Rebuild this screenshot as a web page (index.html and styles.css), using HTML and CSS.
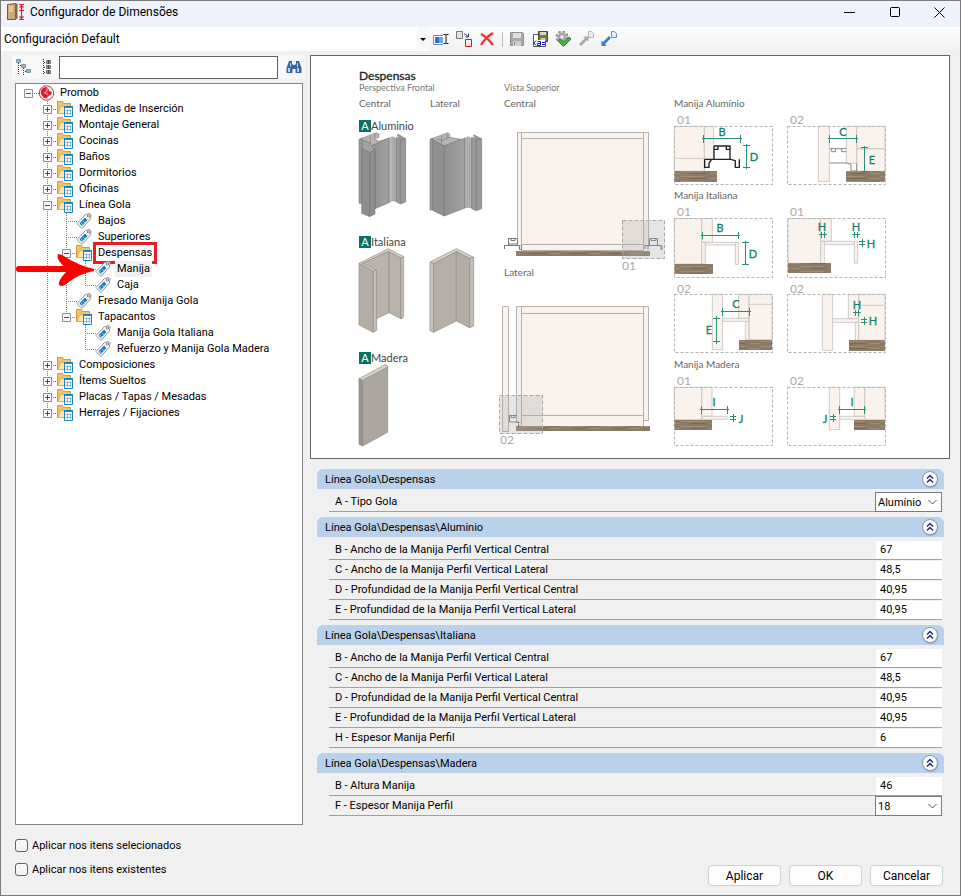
FILE: index.html
```html
<!DOCTYPE html>
<html lang="es">
<head>
    <meta charset="UTF-8" />
    <meta name="viewport" content="width=device-width, initial-scale=1.0" />
    <title>Configurador de Dimensões</title>
    <link rel="stylesheet" href="styles.css">
</head>
<body>
    <svg class="defs" aria-hidden="true">
        <symbol id="i-folder" viewBox="0 0 18 16">
            <path d="M.5 12.500V.5h5l1 2h7v10z" fill="#f0c36a" stroke="#cf9a45"/>
            <path d="M1 12.500l2.500-7h11v7z" fill="#fde7ab" stroke="#dcab5b"/>
            <path d="M7.500 5.500h8v10h-8z" fill="#fff" stroke="#1b86bd"/>
            <path d="M7 6h9" stroke="#1b86bd" stroke-width="2"/>
            <path d="M8.500 9.500h6M8.500 12.500h6M10.500 8v6M13.500 8v6" stroke="#8bb6d2"/>
        </symbol>
        <symbol id="i-tag" viewBox="0 0 18 16">
            <path d="M1 10.500L9.500 1.500l4.500-1 1 1-.5 4.500L6 15.500z" fill="#f6f6f6" stroke="#959595"/>
            <path d="M3.500 10.500l5.500-6 2.500 2.500-5.500 6z" fill="#1d7fc0"/>
            <path d="M5 10l2 2M7 8l2 2" stroke="#8fc6e8"/>
            <circle cx="12.500" cy="3" r="1.200" fill="#fff" stroke="#777"/>
        </symbol>
        <symbol id="i-plus" viewBox="0 0 9 9">
            <path d="M.5.5h8v8h-8z" fill="#f6f6f6" stroke="#919191"/>
            <path d="M2 4.500h5M4.500 2v5" stroke="#3b4f81"/>
        </symbol>
        <symbol id="i-minus" viewBox="0 0 9 9">
            <path d="M.5.5h8v8h-8z" fill="#f6f6f6" stroke="#919191"/>
            <path d="M2 4.500h5" stroke="#3b4f81"/>
        </symbol>
        <symbol id="i-up" viewBox="0 0 18 18">
            <circle cx="9.500" cy="10" r="8" fill="#8796ab" opacity=".5"/>
            <circle cx="9" cy="9" r="7.500" fill="#fdfdfd" stroke="#8b95a8"/>
            <path d="M6 8.500l3-3 3 3M6 12.500l3-3 3 3" fill="none" stroke="#23306e" stroke-width="1.500"/>
        </symbol>
    </svg>

    <div class="window">
        <header class="titlebar">
            <svg width="18" height="18" viewBox="0 0 18 18">
                <path d="M.5 1.500l8-1v16h-8z" fill="#cda974" stroke="#7d5a36"/>
                <path d="M2 3h4v6H2z" fill="#e3c79b"/>
                <path d="M8.500.5h2v15l-2 1z" fill="#8a6338"/>
                <path d="M12 1.500h5M12 7.500h5M12 16.500h5M14.500 2v14M12.500 4.500l2-2 2 2M12.500 13.500l2 2 2-2" fill="none" stroke="#dd1f2f" stroke-width="1.200"/>
            </svg>
            <h1>Configurador de Dimensões</h1>
            <button class="win-btn" aria-label="Minimizar"><svg width="11" height="11"><path d="M0 5.500h11" stroke="#000"/></svg></button>
            <button class="win-btn" aria-label="Maximizar"><svg width="11" height="11"><rect x=".5" y=".5" width="9" height="9" rx="1" fill="none" stroke="#000"/></svg></button>
            <button class="win-btn" aria-label="Cerrar"><svg width="11" height="11"><path d="M.5.5l10 10M10.500.5l-10 10" stroke="#000"/></svg></button>
        </header>

        <div class="toolbar">
            <select class="config-select" aria-label="Configuración">
                <option>Configuración Default</option>
            </select>
            <button class="tool" aria-label="Renombrar">
                <svg viewBox="0 0 16 16"><path d="M.5 4.500h12v9H.5z" fill="#fff" stroke="#6f8fb5"/><path d="M2 6h8v6H2z" fill="#6ba4ee"/><path d="M2 6h4v6H2z" fill="#2f6fd6"/><path d="M10 3h6v11h-6z" fill="#fcfcfc"/><path d="M10.500 3.500h2l.5.5.5-.5h2M10.500 12.500h2l.5-.5.5.5h2M13 4v8" fill="none" stroke="#111"/></svg>
            </button>
            <button class="tool" aria-label="Duplicar">
                <svg viewBox="0 0 16 16"><path d="M.5.5h6v7h-6z" fill="#e4dfe3" stroke="#777"/><path d="M8 2.500l4 3M12.500 2.500v3.500h-3" fill="none" stroke="#1c3d8c"/><path d="M9.500 8.500h6v7h-6z" fill="#fdeaea" stroke="#e01515"/></svg>
            </button>
            <button class="tool" aria-label="Eliminar">
                <svg viewBox="0 0 16 16"><path d="M2 3c4 2 8 6 12 11M14 2C9 5 5 9 2 14" fill="none" stroke="#ff2a22" stroke-width="2.200"/></svg>
            </button>
            <span class="separator"></span>
            <button class="tool" aria-label="Guardar">
                <svg viewBox="0 0 16 16"><path d="M1.500 1.500h12l1 1v12h-13z" fill="#a9a9a9" stroke="#8e8e8e"/><path d="M4 2h8v5H4z" fill="#dedede"/><path d="M4 10h8v5H4z" fill="#cfcfcf"/><path d="M5.500 11v3" stroke="#888"/></svg>
            </button>
            <button class="tool" aria-label="Guardar como">
                <svg viewBox="0 0 16 16"><path d="M1.500 3.500h12v12h-12z" fill="#fff" stroke="#555"/><path d="M6.500.5h9v10h-9z" fill="#77764f" stroke="#4b4b33"/><path d="M8 1h6v3H8z" fill="#d8d8c4"/><path d="M8.500 7h5v3h-5z" fill="#c9c9b4"/><path d="M2 9h11v6H2z" fill="#fff"/><path d="M4 9.500l-2 2.500 2 2.500M8.500 12.500h-3v2h3v-4h-3M10 11.500h3M10 13.500h3" fill="none" stroke="#1010e0"/></svg>
            </button>
            <button class="tool" aria-label="Validar">
                <svg viewBox="0 0 16 16"><circle cx="7" cy="6" r="5.500" fill="none" stroke="#8c8c8c" stroke-width="2" stroke-dasharray="2.500 1.800"/><circle cx="7" cy="6" r="4.600" fill="#a5a5a5"/><circle cx="7" cy="6" r="1.800" fill="#f1f1f1"/><path d="M3 10l2-2 3.500 3L14 6l2 2-7.500 7.500z" fill="#45b545" stroke="#1f7f26"/></svg>
            </button>
            <button class="tool" aria-label="Exportar">
                <svg viewBox="0 0 16 16"><path d="M1 13l6-6-1.500-1.500h5v5L9 9l-6 6z" fill="#a8a8a8"/><path d="M10.500.5h3l2 2v4h-5z" fill="#ececec" stroke="#b5b5b5"/></svg>
            </button>
            <button class="tool" aria-label="Importar">
                <svg viewBox="0 0 16 16"><path d="M10 7l-6 6 1.500 2H.5V9.500L2 11l6-6z" fill="#3481d0"/><path d="M10.500.5h3l2 2v4h-5z" fill="#e2eefb" stroke="#5a94d6"/></svg>
            </button>
        </div>

        <main class="content">
            <section class="side">
                <div class="search-bar">
                    <button class="tool" aria-label="Contraer todo">
                        <svg viewBox="0 0 16 16"><path d="M2.500 4v12M4 6.500h3M7.500 9v7M9 12.500h3" fill="none" stroke="#333" stroke-dasharray="1 1"/><path d="M.5.500h4v3h-4zM5.500 5.500h4v3h-4zM10.500 10.500h4v3h-4z" fill="#eef6fa" stroke="#7b97a6"/><path d="M1 2h3M6 7h3M11 12h3" stroke="#56707f"/></svg>
                    </button>
                    <button class="tool" aria-label="Expandir todo">
                        <svg viewBox="0 0 16 16"><path d="M4.500 0v16M5 3.500h3M5 8.500h3M5 13.500h3" fill="none" stroke="#333" stroke-dasharray="1 1"/><path d="M7.500 1.500h4v3h-4zM7.500 6.500h4v3h-4zM7.500 11.500h4v3h-4z" fill="#dfe6ea" stroke="#777"/><path d="M9.500 1v4M9.500 6v4M9.500 11v4M8 3h3M8 8h3M8 13h3" stroke="#444"/></svg>
                    </button>
                    <input class="search" type="text" aria-label="Buscar">
                    <button class="tool" aria-label="Buscar">
                        <svg viewBox="0 0 16 16"><path d="M3 2h3v3l1.500 1h1L10 5V2h3l2.500 7v5h-6v-4h-3v4h-6V9z" fill="#3a64a6"/><path d="M2 9h2v4H2zM11 9h2v4h-2zM4 4h1v4H4zM11 4h1v4h-1z" fill="#b6d0f0"/></svg>
                    </button>
                </div>

                <div class="tree">
                    <ul class="root">
                        <li>
                            <div class="node"><svg class="toggle"><use href="#i-minus"/></svg>
                                <svg class="icon" viewBox="0 0 18 16"><circle cx="8.500" cy="8" r="7.200" fill="#fff" stroke="#d3222f"/><path d="M8 2c-4 0-6 4-5 7s4 5 6 4l1-2 3-1 1-3-3-1-1-3z" fill="#d9202e"/><path d="M9 3v3.500L6 8M7 8l3 1.500" stroke="#f7b9bd" fill="none"/></svg><span>Promob</span></div>
                            <ul>
                                <li><div class="node"><svg class="toggle"><use href="#i-plus"/></svg><svg class="icon"><use href="#i-folder"/></svg><span>Medidas de Inserción</span></div></li>
                                <li><div class="node"><svg class="toggle"><use href="#i-plus"/></svg><svg class="icon"><use href="#i-folder"/></svg><span>Montaje General</span></div></li>
                                <li><div class="node"><svg class="toggle"><use href="#i-plus"/></svg><svg class="icon"><use href="#i-folder"/></svg><span>Cocinas</span></div></li>
                                <li><div class="node"><svg class="toggle"><use href="#i-plus"/></svg><svg class="icon"><use href="#i-folder"/></svg><span>Baños</span></div></li>
                                <li><div class="node"><svg class="toggle"><use href="#i-plus"/></svg><svg class="icon"><use href="#i-folder"/></svg><span>Dormitorios</span></div></li>
                                <li><div class="node"><svg class="toggle"><use href="#i-plus"/></svg><svg class="icon"><use href="#i-folder"/></svg><span>Oficinas</span></div></li>
                                <li>
                                    <div class="node"><svg class="toggle"><use href="#i-minus"/></svg><svg class="icon"><use href="#i-folder"/></svg><span>Línea Gola</span></div>
                                    <ul>
                                        <li><div class="node leaf"><svg class="icon"><use href="#i-tag"/></svg><span>Bajos</span></div></li>
                                        <li><div class="node leaf"><svg class="icon"><use href="#i-tag"/></svg><span>Superiores</span></div></li>
                                        <li>
                                            <div class="node"><svg class="toggle"><use href="#i-minus"/></svg><svg class="icon"><use href="#i-folder"/></svg><span class="marked">Despensas</span></div>
                                            <ul>
                                                <li><div class="node leaf selected"><svg class="icon"><use href="#i-tag"/></svg><span>Manija</span>
                                                    <svg class="arrow" viewBox="0 0 80 38"><path d="M4 18h60" stroke="#fe0000" stroke-width="6" stroke-linecap="round"/><path d="M43 3c6 0 12 9 36 15v2C55 25 53 35 46 35c-5-1-1-8 7-16C46 13 41 8 43 3z" fill="#fe0000"/></svg></div></li>
                                                <li><div class="node leaf"><svg class="icon"><use href="#i-tag"/></svg><span>Caja</span></div></li>
                                            </ul>
                                        </li>
                                        <li><div class="node leaf"><svg class="icon"><use href="#i-tag"/></svg><span>Fresado Manija Gola</span></div></li>
                                        <li>
                                            <div class="node"><svg class="toggle"><use href="#i-minus"/></svg><svg class="icon"><use href="#i-folder"/></svg><span>Tapacantos</span></div>
                                            <ul>
                                                <li><div class="node leaf"><svg class="icon"><use href="#i-tag"/></svg><span>Manija Gola Italiana</span></div></li>
                                                <li><div class="node leaf"><svg class="icon"><use href="#i-tag"/></svg><span>Refuerzo y Manija Gola Madera</span></div></li>
                                            </ul>
                                        </li>
                                    </ul>
                                </li>
                                <li><div class="node"><svg class="toggle"><use href="#i-plus"/></svg><svg class="icon"><use href="#i-folder"/></svg><span>Composiciones</span></div></li>
                                <li><div class="node"><svg class="toggle"><use href="#i-plus"/></svg><svg class="icon"><use href="#i-folder"/></svg><span>Ítems Sueltos</span></div></li>
                                <li><div class="node"><svg class="toggle"><use href="#i-plus"/></svg><svg class="icon"><use href="#i-folder"/></svg><span>Placas / Tapas / Mesadas</span></div></li>
                                <li><div class="node"><svg class="toggle"><use href="#i-plus"/></svg><svg class="icon"><use href="#i-folder"/></svg><span>Herrajes / Fijaciones</span></div></li>
                            </ul>
                        </li>
                    </ul>
                </div>

                <div class="checks">
                    <label><input type="checkbox">Aplicar nos itens selecionados</label>
                    <label><input type="checkbox">Aplicar nos itens existentes</label>
                </div>
            </section>

            <section class="detail">
                <div class="preview">
                    <svg class="drawing" viewBox="311 56 638 402" role="img" aria-label="Despensas">
                        <defs>
                            <linearGradient id="metal" x1="0" x2="1"><stop offset="0" stop-color="#8f8f8f"/><stop offset="1" stop-color="#a2a2a2"/></linearGradient>
                            <pattern id="wood" width="40" height="5" patternUnits="userSpaceOnUse">
                                <path d="M0 0h40v5H0z" fill="#8d7b66"/>
                                <path d="M0 1.500h24M30 3.500h10" stroke="#a08d76"/>
                                <path d="M10 3.500h16" stroke="#7b6a56"/>
                            </pattern>
                        </defs>

                        <text class="t-title" x="359" y="80">Despensas</text>
                        <g class="t-sub">
                            <text x="359" y="91">Perspectiva Frontal</text>
                            <text x="504" y="91">Vista Superior</text>
                        </g>
                        <g class="t-text">
                            <text x="359" y="107">Central</text>
                            <text x="430" y="107">Lateral</text>
                            <text x="504" y="107">Central</text>
                            <text x="504" y="276">Lateral</text>
                            <text x="674" y="107">Manija Alumínio</text>
                            <text x="674" y="199">Manija Italiana</text>
                            <text x="674" y="368">Manija Madera</text>
                        </g>
                        <g class="t-num">
                            <text x="622" y="270">01</text>
                            <text x="500" y="444">02</text>
                            <text x="677" y="124">01</text>
                            <text x="790" y="124">02</text>
                            <text x="677" y="216">01</text>
                            <text x="790" y="216">01</text>
                            <text x="677" y="293">02</text>
                            <text x="790" y="293">02</text>
                            <text x="677" y="385">01</text>
                            <text x="790" y="385">02</text>
                        </g>
                        <path d="M359 120h12v12h-12zM359 236h12v12h-12zM359 352h12v12h-12z" fill="#0c7163"/>
                        <g class="t-badge">
                            <text x="365" y="130">A</text>
                            <text x="365" y="246">A</text>
                            <text x="365" y="362">A</text>
                        </g>
                        <g class="t-kind">
                            <text x="371" y="130">Aluminio</text>
                            <text x="371" y="246">Italiana</text>
                            <text x="371" y="362">Madera</text>
                        </g>

                        <!-- aluminium profiles -->
                        <g transform="translate(345 60) scale(.3333)" stroke="#6a6a6a" stroke-width="1.500" stroke-linejoin="round">
                            <path d="M42 238l10-4v196H42z" fill="#9a9a9a"/>
                            <path d="M48 236l46-18 8 4v10l-14 6 14 6 30-9-46 28z" fill="#b4b4b4"/>
                            <path d="M76 258l56-24v194l-42 18V268z" fill="url(#metal)"/>
                            <path d="M132 234l10-4 12 6v188l-12-2-10 6z" fill="#b6b6b6" stroke-width="1"/>
                            <path d="M144 232v192M149 233v192" stroke="#8f8f8f"/>
                            <path d="M158 222l24 14v190l-16 6-12-6V232l10 4-6-8z" fill="#999"/>
                            <path d="M166 240l16-4M166 240v190" fill="none"/>
                            <path d="M52 240v26l22 12 16-10-16-6v-14z" fill="#a3a3a3"/>
                            <path d="M50 266l24 12 16-10v194l-16 8-24-10z" fill="#8f8f8f"/>
                            <path d="M74 278v190M76 226v26M90 220v14" fill="none"/>

                            <path d="M255 238l9-4v216h-9z" fill="#9a9a9a"/>
                            <path d="M260 236l48-18 6 4v10l34 6-50 20z" fill="#b4b4b4"/>
                            <path d="M290 228v22M306 222v14M276 236l14 6 24-10" fill="none"/>
                            <path d="M264 240l34 18v210l-34-16z" fill="#8f8f8f"/>
                            <path d="M298 258l62-24v210l-62 24z" fill="url(#metal)"/>
                            <path d="M360 234l10-4 10 6v208l-10-2-10 2z" fill="#b6b6b6" stroke-width="1"/>
                            <path d="M368 232v210M374 232v210" stroke="#8f8f8f"/>
                            <path d="M386 224l24 12v210l-16 6-14-6V232l12 4-6-8z" fill="#999"/>
                            <path d="M394 240l16-4M394 240v210" fill="none"/>
                        </g>

                        <!-- italian and wood profiles -->
                        <g transform="translate(345 230) scale(.3333)" stroke="#8e8983" stroke-width="2" stroke-linejoin="round">
                            <path d="M50 100l82-36v184l-38 18z" fill="#bab4ad"/>
                            <path d="M132 64l36 20v182l-36-18z" fill="#b9b3ac"/>
                            <path d="M168 84l8-4v182l-8 4z" fill="#c7c2bc"/>
                            <path d="M42 100l88-44 46 24-8 4-38-20-78 36 42 20-10 4z" fill="#d5d0ca"/>
                            <path d="M42 100l43 23v184l-43-22z" fill="#b3ada6"/>
                            <path d="M85 123l10-4v182l-10 6z" fill="#c4beb8"/>

                            <path d="M255 96l79-40 52 26-10 4-42-20-66 34z" fill="#d5d0ca"/>
                            <path d="M255 96l11 5v206l-11-5z" fill="#c7c2bc"/>
                            <path d="M266 101l68-36v208l-68 34z" fill="#b5afa8"/>
                            <path d="M334 65l40 20v208l-40-20z" fill="#b3ada6"/>
                            <path d="M374 86l12-4v206l-12 5z" fill="#c4beb8"/>

                            <path d="M42 446l78-42 8 4v8l-76 36z" fill="#d5d0ca"/>
                            <path d="M42 446l11 5v197l-11-5z" fill="#97928c"/>
                            <path d="M53 451l75-40v196l-75 41z" fill="#aca6a0"/>
                        </g>

                        <!-- top views -->
                        <g class="board">
                            <path d="M521.500 138.500h122v112h-122z"/>
                            <path d="M517.500 132.500h4v113h-4zM643.500 132.500h5v113h-5zM521.500 132.500h122v6h-122zM521.500 244.500h122v6h-122z"/>
                            <path d="M502.500 306.500h6v125h-6zM516.500 306.500h5v116h-5zM643.500 306.500h5v114h-5zM521.500 306.500h122v7h-122zM521.500 313.500h122v102h-122zM521.500 415.500h122v11h-122z"/>
                        </g>
                        <path d="M516 251h134v5H516zM516 426h134v5H516z" fill="url(#wood)"/>
                        <g fill="none" stroke="#777">
                            <path d="M504.500 249v-3.500h4v-7h9M508.500 239v5h9v-5M504.500 245.500h15v4h2v-4M511 238.500v2h4v-2"/>
                            <path d="M645 249v-3.500h3v4M648 245.500h13v4h1v-4M649.500 245v-6.500h8v7M651 238.500v2h5v-2"/>
                            <path d="M509 415.500h8M509.500 416v6h9v4h2M511 415.500v2h4v-2"/>
                        </g>
                        <g fill="#aaa" fill-opacity=".3" stroke="#aaa" stroke-dasharray="4 2">
                            <path d="M622.500 220.500h42v38h-42zM499.500 395.500h43v38h-43z"/>
                        </g>

                        <!-- detail views -->
                        <g transform="translate(665 90) scale(.3333)">
                            <g class="board thick">
                                <path d="M28 109h90v135H28zM118 109h28v99h-28zM28 205h90v39H28z"/>
                                <path d="M460 109h33v165h-33zM544 109h31v111h-31zM575 109h85v67h-85zM575 176h85v68h-85z"/>
                                <path d="M28 386h82v136H28zM110 386h32v71h-32zM110 457h11v65h-11zM211 457h10v66h-10zM121 457h90v8h-90z"/>
                                <path d="M369 386h98v134h-98zM467 386h32v68h-32zM467 454h11v66h-11zM568 454h10v66h-10zM478 454h90v10h-90z"/>
                            </g>
                            <path d="M147 168h48v40M147 168v40M147 178h12v-9M184 169v9h12M119 208h78l14 4v20h12v-24M119 208v24h13v-12l8-12" fill="none" stroke="#222" stroke-width="4"/>
                            <path d="M494 176h50M500 176v9h12v-9M530 176v9h14M494 219h50l14 4v20h17v-23" fill="none" stroke="#888" stroke-width="3"/>
                        </g>
                        <g transform="translate(665 270) scale(.3333)">
                            <g class="board thick">
                                <path d="M142 73h31v166h-31zM221 73h31v72h-31zM252 73h69v136h-69zM252 103h69M173 145h79v9h-79zM241 154h11v55h-11z"/>
                                <path d="M472 73h31v168h-31zM550 73h31v73h-31zM581 73h79v138h-79zM581 106h79M503 146h78v11h-78zM571 157h10v54h-10z"/>
                                <path d="M28 352h82v97H28zM110 352h31v87h-31zM110 439h76v9h-76z"/>
                                <path d="M493 352h31v127h-31zM568 352h31v87h-31zM599 352h61v97h-61zM524 439h75v9h-75z"/>
                            </g>
                        </g>
                        <path d="M674 171h43v11h-43zM846 171h39v11h-39zM674 264h39v10h-39zM788 263h43v10h-43zM739 340h33v10h-33zM849 340h36v11h-36zM674 420h38v10h-38zM854 420h31v10h-31z" fill="url(#wood)"/>
                        <g class="frame">
                            <path d="M674.500 126.500h98v58h-98zM787.500 126.500h98v58h-98zM674.500 218.500h98v59h-98zM787.500 218.500h98v59h-98zM674.500 294.500h98v58h-98zM787.500 294.500h98v58h-98zM674.500 387.500h98v58h-98zM787.500 387.500h98v58h-98z"/>
                        </g>

                        <!-- dimension lines -->
                        <g class="dim">
                            <path d="M702 138.500h40M703.500 135v8M740.500 135v8M746.500 144v25M743 145.500h7M743 167.500h7"/>
                            <path d="M828 138.500h30M829.500 135v8M856.500 135v8M864.500 146v26M861 147.500h7M861 171.500h7"/>
                            <path d="M701 235.500h39M702.500 232v7M738.500 232v7M745.500 241v24M742 242.500h7M742 264.500h7"/>
                            <path d="M819 234.500h8M821.500 232v6M824.500 232v6M852 234.500h8M854.500 232v6M857.500 232v6M859 241.500h6M859 244.500h6M862.500 239v8"/>
                            <path d="M721 311.500h30M722.500 308v8M749.500 308v8M716.500 316v28M713 318.500h7M713 341.500h7"/>
                            <path d="M853 312.500h8M855.500 310v6M858.500 310v6M861 319.500h6M861 322.500h6M864.500 317v8"/>
                            <path d="M700 409.500h29M701.500 406v8M727.500 406v8M730 416.500h6M730 419.500h6M733.500 414v8"/>
                            <path d="M838 409.500h28M839.500 406v8M864.500 406v8M830 416.500h6M830 419.500h6M833.500 414v8"/>
                        </g>
                        <g class="t-dim">
                            <text x="722" y="136">B</text><text x="754" y="161">D</text>
                            <text x="843" y="136">C</text><text x="872" y="164">E</text>
                            <text x="720" y="232">B</text><text x="753" y="258">D</text>
                            <text x="822" y="231">H</text><text x="856" y="231">H</text><text x="871" y="248">H</text>
                            <text x="736" y="308">C</text><text x="709" y="334">E</text>
                            <text x="857" y="309">H</text><text x="873" y="325">H</text>
                            <text x="714" y="406">I</text><text x="741" y="423">J</text>
                            <text x="852" y="406">I</text><text x="825" y="423">J</text>
                        </g>
                    </svg>
                </div>

                <form class="props">
                    <fieldset>
                        <div class="group-head"><h2>Línea Gola\Despensas</h2><button type="button" aria-label="Contraer"><svg width="18" height="18"><use href="#i-up"/></svg></button></div>
                        <div class="row"><label for="tipo">A - Tipo Gola</label><select id="tipo"><option>Alumínio</option><option>Italiana</option><option>Madera</option></select></div>
                    </fieldset>
                    <fieldset>
                        <div class="group-head"><h2>Línea Gola\Despensas\Aluminio</h2><button type="button" aria-label="Contraer"><svg width="18" height="18"><use href="#i-up"/></svg></button></div>
                        <div class="row"><label for="al-b">B - Ancho de la Manija Perfil Vertical Central</label><input id="al-b" type="text" value="67"></div>
                        <div class="row"><label for="al-c">C - Ancho de la Manija Perfil Vertical Lateral</label><input id="al-c" type="text" value="48,5"></div>
                        <div class="row"><label for="al-d">D - Profundidad de la Manija Perfil Vertical Central</label><input id="al-d" type="text" value="40,95"></div>
                        <div class="row"><label for="al-e">E - Profundidad de la Manija Perfil Vertical Lateral</label><input id="al-e" type="text" value="40,95"></div>
                    </fieldset>
                    <fieldset>
                        <div class="group-head"><h2>Línea Gola\Despensas\Italiana</h2><button type="button" aria-label="Contraer"><svg width="18" height="18"><use href="#i-up"/></svg></button></div>
                        <div class="row"><label for="it-b">B - Ancho de la Manija Perfil Vertical Central</label><input id="it-b" type="text" value="67"></div>
                        <div class="row"><label for="it-c">C - Ancho de la Manija Perfil Vertical Lateral</label><input id="it-c" type="text" value="48,5"></div>
                        <div class="row"><label for="it-d">D - Profundidad de la Manija Perfil Vertical Central</label><input id="it-d" type="text" value="40,95"></div>
                        <div class="row"><label for="it-e">E - Profundidad de la Manija Perfil Vertical Lateral</label><input id="it-e" type="text" value="40,95"></div>
                        <div class="row"><label for="it-h">H - Espesor Manija Perfil</label><input id="it-h" type="text" value="6"></div>
                    </fieldset>
                    <fieldset>
                        <div class="group-head"><h2>Línea Gola\Despensas\Madera</h2><button type="button" aria-label="Contraer"><svg width="18" height="18"><use href="#i-up"/></svg></button></div>
                        <div class="row"><label for="ma-b">B - Altura Manija</label><input id="ma-b" type="text" value="46"></div>
                        <div class="row"><label for="ma-f">F - Espesor Manija Perfil</label><select id="ma-f"><option>18</option></select></div>
                    </fieldset>
                </form>

                <div class="actions">
                    <button>Aplicar</button>
                    <button>OK</button>
                    <button>Cancelar</button>
                </div>
            </section>
        </main>
    </div>
</body>
</html>
```

FILE: styles.css
```css
* {
    box-sizing: border-box;
}

body {
    margin: 0;
    font-family: Roboto, 'Liberation Sans', sans-serif;
    font-size: 11px;
    color: #000;
}

button, input, select {
    font: inherit;
    color: inherit;
}

ul {
    list-style: none;
    margin: 0;
    padding: 0;
}

.defs {
    display: none;
}

.window {
    display: flex;
    flex-direction: column;
    min-height: 100vh;
    border: 1px solid #7b7b7b;
    background-color: #f0f0f0;
}

.titlebar {
    display: flex;
    align-items: center;
    height: 26px;
    padding: 0 0 4px 6px;
    background-color: #eff2fa;
}

.titlebar h1 {
    flex: 1;
    margin: 0 0 0 5px;
    font-size: 12px;
    font-weight: 400;
}

.win-btn {
    display: grid;
    place-items: center;
    width: 46px;
    height: 22px;
    padding: 0;
    border: 0;
    background: none;
}

.win-btn:last-child {
    width: 42px;
}

.toolbar {
    display: flex;
    align-items: center;
    height: 24px;
    background: linear-gradient(#fcfcfc, #f1f1f1);
}

.config-select {
    width: 428px;
    height: 24px;
    padding: 0 0 0 3px;
    border: 0;
    appearance: none;
    background: #fff url("data:image/svg+xml,%3Csvg xmlns='http://www.w3.org/2000/svg' width='12' height='24'%3E%3Cpath d='M0 0h12v24H0z' fill='%23f8f8f8'/%3E%3Cpath d='M3 11h6l-3 3z'/%3E%3C/svg%3E") right no-repeat;
    font-size: 12px;
}

.tool {
    display: grid;
    place-items: center;
    width: 23px;
    height: 23px;
    padding: 0;
    border: 0;
    background: none;
}

.tool svg {
    width: 16px;
    height: 16px;
}

.separator {
    width: 1px;
    height: 15px;
    margin: 0 2px 0 4px;
    background-color: #bdbdbd;
}

.content {
    flex: 1;
    display: flex;
    gap: 5px;
    padding: 4px 10px 9px 11px;
}

.side {
    flex: 0 0 293px;
    display: flex;
    flex-direction: column;
}

.search-bar {
    display: flex;
    align-items: center;
    height: 24px;
    background-color: #f8f8f8;
}

.search {
    flex: 1;
    min-width: 0;
    height: 23px;
    margin: 0 4px 0 1px;
    border: 1px solid #5f6063;
    background-color: #fff;
}

.tree {
    flex: 1;
    margin: 4px 2px 0 3px;
    padding: 1px 3px;
    border: 1px solid #828790;
    background-color: #fff;
}

.tree ul ul {
    margin-left: 19px;
}

.tree li {
    background: repeating-linear-gradient(#808080 0 1px, transparent 1px 2px) 9px 0 / 1px 100% no-repeat;
}

.tree li:last-child {
    background-size: 1px 8px;
}

.root > li:last-child {
    background: none;
}

.node {
    position: relative;
    display: flex;
    align-items: center;
    height: 16px;
    white-space: nowrap;
    background: repeating-linear-gradient(90deg, #808080 0 1px, transparent 1px 2px) 9px 8px / 12px 1px no-repeat;
}

.toggle {
    width: 9px;
    height: 9px;
    margin: 0 5px;
}

.icon {
    width: 18px;
    height: 16px;
}

.leaf .icon {
    margin-left: 19px;
}

.node span {
    margin-left: 2px;
    padding: 0 2px;
    line-height: 16px;
}

.selected span {
    background-color: #f0f0f0;
}

.node .marked {
    outline: 3px solid #ed1c24;
}

.arrow {
    position: absolute;
    top: -10px;
    left: -61px;
    width: 80px;
    height: 38px;
}

.checks {
    display: flex;
    flex-direction: column;
    gap: 8px;
    padding: 12px 0 9px 3px;
}

.checks label {
    display: flex;
    align-items: center;
    gap: 4px;
    height: 16px;
}

.checks input {
    width: 13px;
    height: 13px;
    margin: 0;
    border: 1px solid #606060;
    border-radius: 3px;
    appearance: none;
    background-color: #f6f6f6;
}

.detail {
    flex: 1;
    min-width: 0;
    display: flex;
    flex-direction: column;
}

.preview {
    border: 1px solid #646464;
    background-color: #fff;
}

.drawing {
    display: block;
    width: 100%;
    font-family: Lato, sans-serif;
}

.t-title {
    font-size: 12px;
    fill: #222;
    stroke: #222;
    stroke-width: 0.3px;
}

.t-sub {
    font-size: 9px;
    fill: #777;
}

.t-text {
    font-size: 10px;
    fill: #666;
}

.t-num {
    font-size: 12px;
    fill: #aaa;
}

.t-kind {
    font-size: 11px;
    fill: #444;
}

.t-badge {
    font-size: 11px;
    fill: #fff;
    text-anchor: middle;
}

.t-dim {
    font-size: 11px;
    fill: #128069;
    stroke: #128069;
    stroke-width: 0.3px;
    text-anchor: middle;
}

.board {
    fill: #faf3ed;
    stroke: #b3b0ad;
}

.thick {
    stroke: #cfcbc7;
    stroke-width: 3px;
}

.frame {
    fill: none;
    stroke: #b5b5b5;
    stroke-dasharray: 3 2;
}

.dim {
    fill: none;
    stroke: #2a8f7a;
}

.props {
    flex: 1;
    padding: 10px 6px 0 7px;
}

fieldset {
    margin: 0 0 5px;
    padding: 0;
    border: 0;
}

.group-head {
    display: flex;
    align-items: center;
    justify-content: space-between;
    height: 20px;
    margin-bottom: 3px;
    padding: 0 5px 0 8px;
    border-radius: 6px 6px 0 0;
    background-color: #b9d1ea;
}

.group-head h2 {
    margin: 0;
    font-size: 11px;
    font-weight: 400;
}

.group-head button {
    height: 18px;
    padding: 0;
    border: 0;
    background: none;
}

.row {
    display: flex;
    align-items: center;
    height: 20px;
    margin: 0 2px 0 12px;
    border-bottom: 1px solid #a0a0a0;
}

.row label {
    flex: 1;
    padding-left: 6px;
}

.row input {
    width: 66px;
    height: 18px;
    padding: 0 4px;
    border: 0;
    background-color: #fff;
}

.row select {
    align-self: flex-start;
    width: 67px;
    height: 20px;
    padding: 0 2px;
    border: 1px solid #7a7a7a;
    appearance: none;
    background: #fff url("data:image/svg+xml,%3Csvg xmlns='http://www.w3.org/2000/svg' width='14' height='8'%3E%3Cpath d='M1.500 2l4 4 4-4' fill='none' stroke='%23555'/%3E%3C/svg%3E") right no-repeat;
}

.actions {
    display: flex;
    justify-content: flex-end;
    gap: 8px;
    padding-right: 7px;
}

.actions button {
    width: 73px;
    height: 21px;
    padding: 0;
    border: 1px solid #d0d0d0;
    border-radius: 4px;
    background-color: #fdfdfd;
    font-size: 12px;
}
```
